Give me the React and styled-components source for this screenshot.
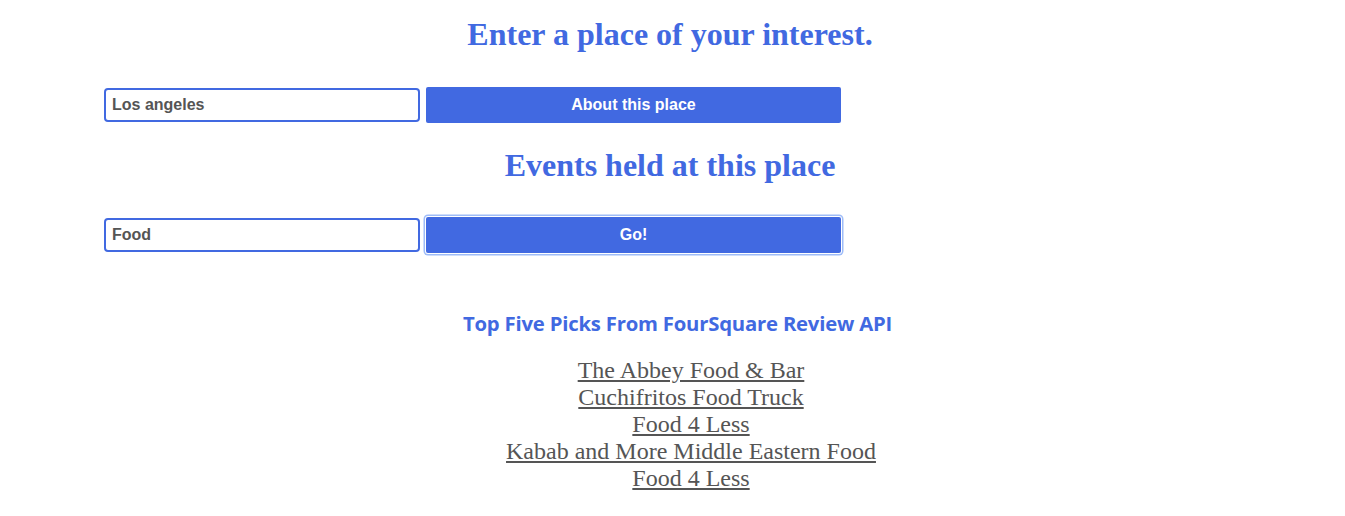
import React from 'react'
import styled, { createGlobalStyle } from 'styled-components'

const GlobalStyle = createGlobalStyle`
  body {
    margin: 8px;
    background: #fff;
    font-family: 'Liberation Serif', 'Times New Roman', serif;
  }
`

const Page = styled.div`
  display: flex;
  flex-direction: column;
`

const Heading = styled.h1`
  margin: ${p => p.$top}px 0 0;
  padding-right: 5px;
  text-align: center;
  font-family: 'Liberation Serif', 'Times New Roman', serif;
  font-size: 32px;
  font-weight: bold;
  color: royalblue;
  line-height: 37px;
`

const SearchForm = styled.form`
  display: flex;
  align-items: center;
  gap: 6px;
  padding-left: 96px;
  margin-top: ${p => p.$top}px;
`

const TextInput = styled.input`
  box-sizing: border-box;
  width: 316px;
  height: 34px;
  padding: 0 6px;
  border: 2px solid royalblue;
  border-radius: 4px;
  font-family: 'Liberation Sans', Arial, sans-serif;
  font-size: 16px;
  font-weight: bold;
  color: #555;
  outline: none;
`

const SubmitButton = styled.button`
  box-sizing: border-box;
  width: 415px;
  height: 36px;
  border: none;
  border-radius: 2px;
  background: royalblue;
  color: #fff;
  font-family: 'Liberation Sans', Arial, sans-serif;
  font-size: 16px;
  font-weight: bold;
  cursor: pointer;
  box-shadow: ${p => (p.$focused ? '0 0 0 1px #fff, 0 0 0 2.5px #9ebcf8' : 'none')};
`

const PicksTitle = styled.h3`
  margin: 56px 0 0;
  padding-left: 10px;
  text-align: center;
  font-family: 'Open Sans', 'Noto Sans', sans-serif;
  font-size: 20.3px;
  font-weight: bold;
  color: royalblue;
  letter-spacing: -0.2px;
`

const PickList = styled.ul`
  list-style: none;
  margin: 20px 0 0;
  padding-left: 37px;
  text-align: center;
`

const PickItem = styled.li`
  font-size: 24px;
  line-height: 27px;
`

const PickLink = styled.a`
  color: #555;
  text-decoration: underline;
`

const picks = [
  'The Abbey Food & Bar',
  'Cuchifritos Food Truck',
  'Food 4 Less',
  'Kabab and More Middle Eastern Food',
  'Food 4 Less',
]

const App = () => (
  <Page>
    <GlobalStyle />
    <Heading $top={8}>Enter a place of your interest.</Heading>
    <SearchForm $top={34} onSubmit={e => e.preventDefault()}>
      <TextInput defaultValue="Los angeles" />
      <SubmitButton type="submit">About this place</SubmitButton>
    </SearchForm>
    <Heading $top={24}>Events held at this place</Heading>
    <SearchForm $top={33} onSubmit={e => e.preventDefault()}>
      <TextInput defaultValue="Food" />
      <SubmitButton type="submit" $focused>Go!</SubmitButton>
    </SearchForm>
    <PicksTitle>Top Five Picks From FourSquare Review API</PicksTitle>
    <PickList>
      {picks.map((name, i) => (
        <PickItem key={i}>
          <PickLink href="#">{name}</PickLink>
        </PickItem>
      ))}
    </PickList>
  </Page>
)

export default App
